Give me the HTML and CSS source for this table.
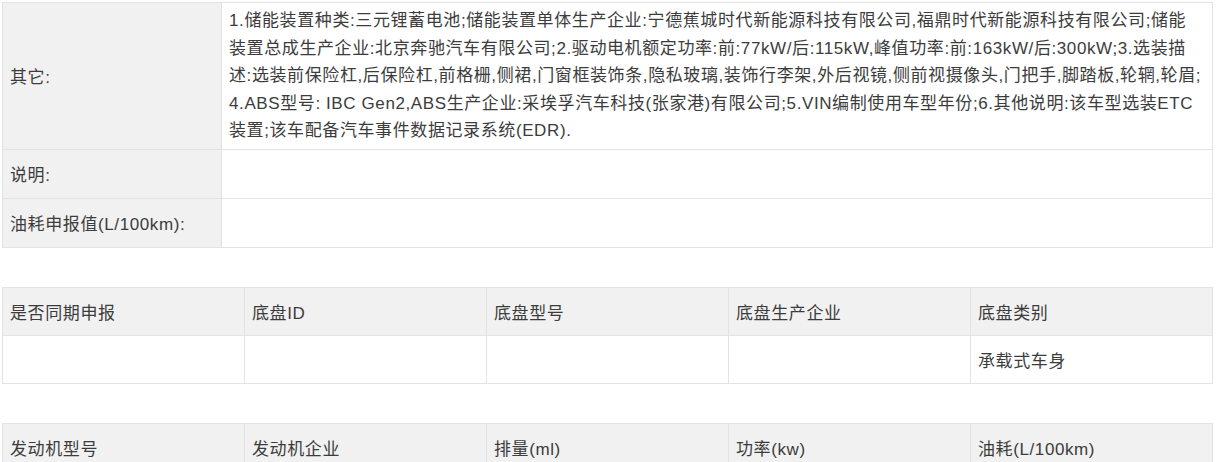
FILE: index.html
```html
<!DOCTYPE html>
<html lang="zh-CN">
<head>
  <meta charset="UTF-8">
  <meta name="viewport" content="width=device-width, initial-scale=1">
  <title>车辆参数</title>
  <link rel="stylesheet" href="styles.css">
</head>
<body>

<div class="page">

  <table class="info-table">
    <tr>
      <th>其它:</th>
      <td class="long-text">1.储能装置种类:三元锂蓄电池;储能装置单体生产企业:宁德蕉城时代新能源科技有限公司,福鼎时代新能源科技有限公司;储能<br>装置总成生产企业:北京奔驰汽车有限公司;2.驱动电机额定功率:前:77kW/后:115kW,峰值功率:前:163kW/后:300kW;3.选装描<br>述:选装前保险杠,后保险杠,前格栅,侧裙,门窗框装饰条,隐私玻璃,装饰行李架,外后视镜,侧前视摄像头,门把手,脚踏板,轮辋,轮眉;<br>4.ABS型号: IBC Gen2,ABS生产企业:采埃孚汽车科技(张家港)有限公司;5.VIN编制使用车型年份;6.其他说明:该车型选装ETC<br>装置;该车配备汽车事件数据记录系统(EDR).</td>
    </tr>
    <tr>
      <th>说明:</th>
      <td></td>
    </tr>
    <tr>
      <th>油耗申报值(L/100km):</th>
      <td></td>
    </tr>
  </table>

  <table class="grid-table">
    <tr>
      <th>是否同期申报</th>
      <th>底盘ID</th>
      <th>底盘型号</th>
      <th>底盘生产企业</th>
      <th>底盘类别</th>
    </tr>
    <tr>
      <td></td>
      <td></td>
      <td></td>
      <td></td>
      <td>承载式车身</td>
    </tr>
  </table>

  <table class="grid-table">
    <tr>
      <th>发动机型号</th>
      <th>发动机企业</th>
      <th>排量(ml)</th>
      <th>功率(kw)</th>
      <th>油耗(L/100km)</th>
    </tr>
    <tr>
      <td></td>
      <td></td>
      <td></td>
      <td></td>
      <td></td>
    </tr>
  </table>

</div>

</body>
</html>
```

FILE: styles.css
```css
body {
  margin: 0;
  font-family: 'Liberation Sans', 'Noto Sans CJK SC', sans-serif;
  font-size: 17px;
  letter-spacing: 0.6px;
  color: #3c3c3c;
  background: #ffffff;
}
.page {
  width: 1211px;
  padding: 2px 0 0 2px;
}
table {
  width: 100%;
  border-collapse: collapse;
  table-layout: fixed;
}
th, td {
  border: 1px solid #e3e3e3;
  text-align: left;
  font-weight: normal;
  vertical-align: middle;
  padding: 0 7px;
}
th {
  background: #f1f1f1;
}
.info-table th {
  width: 204px;
  height: 48px;
}
.info-table td {
  height: 48px;
}
.info-table .long-text {
  padding: 4px 2px 4px 7px;
  line-height: 27.5px;
}
.grid-table {
  margin-top: 39px;
}
.grid-table th,
.grid-table td {
  height: 47px;
}
```
